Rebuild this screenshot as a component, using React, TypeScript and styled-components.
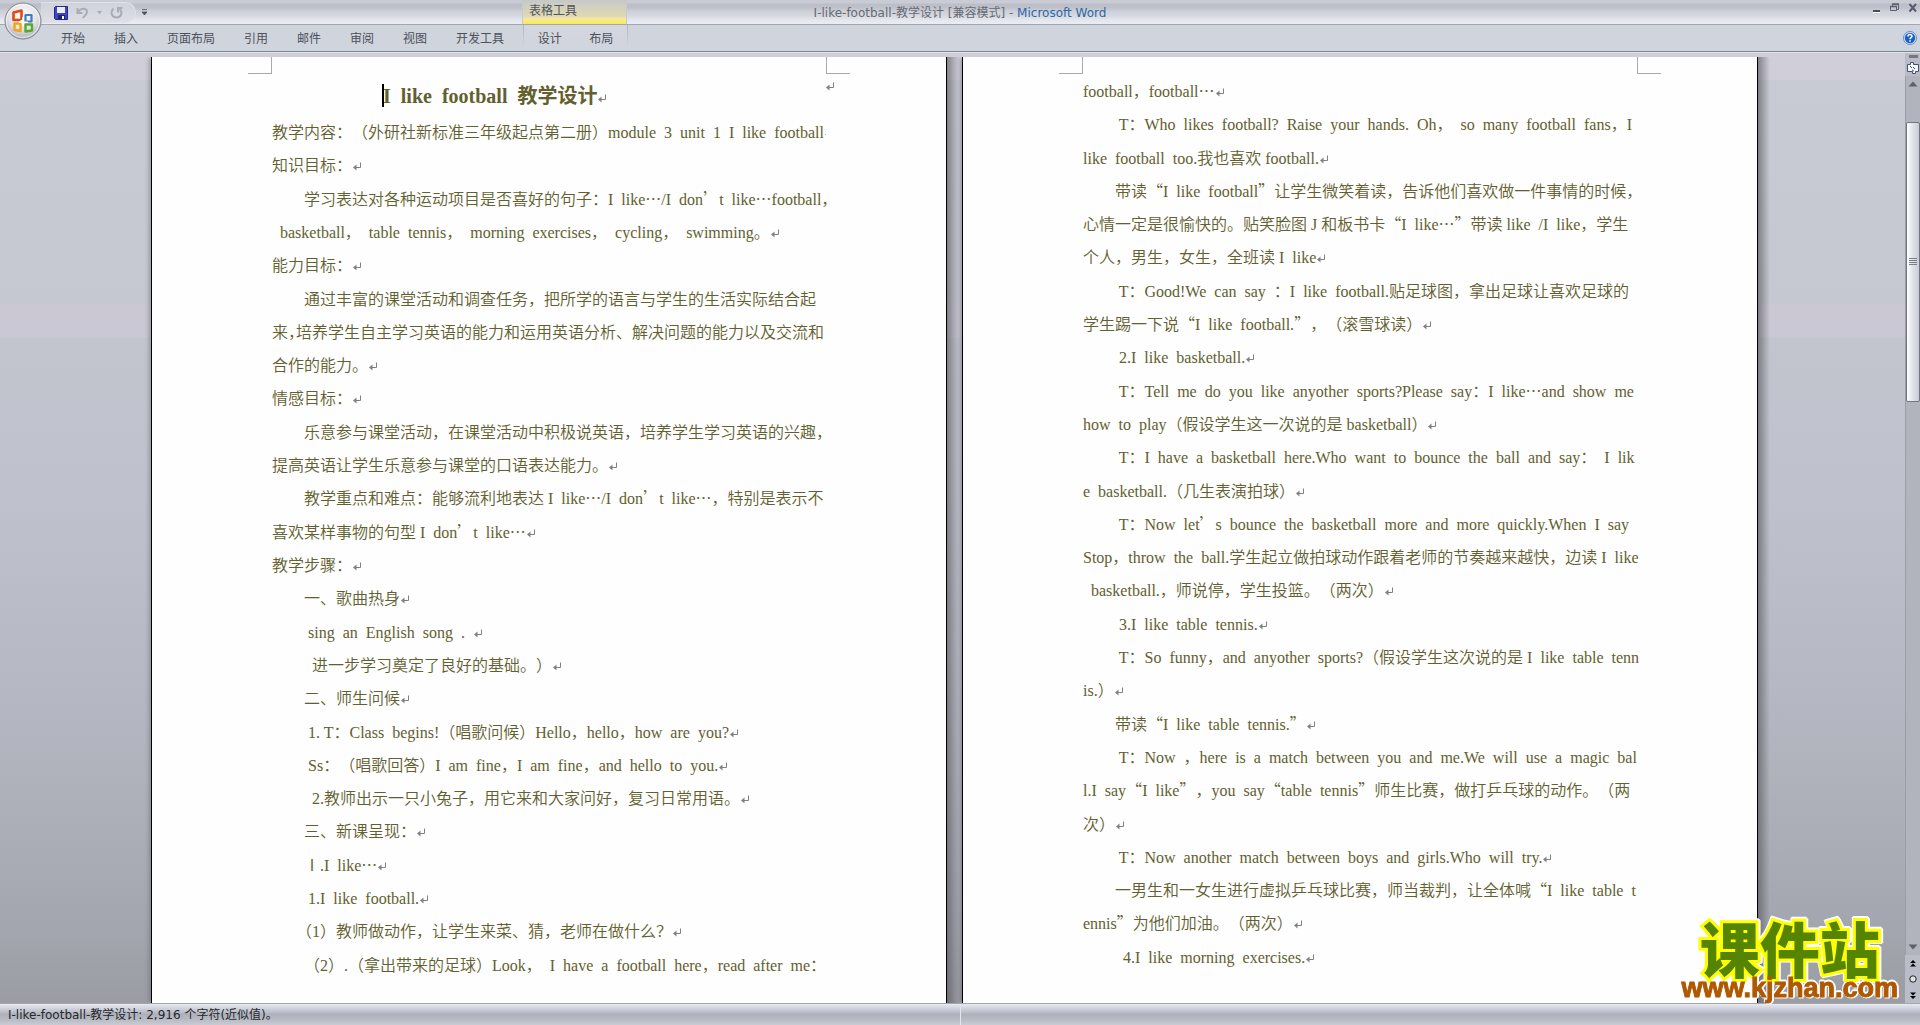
import React from "react";
import styled, { createGlobalStyle, css } from "styled-components";

const uiFont = `"DejaVu Sans", "Noto Sans CJK SC", sans-serif`;
const docFont = `"Liberation Serif", "Noto Sans CJK SC", serif`;

const Global = createGlobalStyle`
  * { box-sizing: border-box; }
  body { margin: 0; background: #fff; font-family: ${uiFont}; font-size: 12px; }
  button { border: 0; padding: 0; background: none; font: inherit; color: inherit; cursor: pointer; }
  svg { display: block; }
`;

const Window = styled.div`
  display: flex;
  flex-direction: column;
  min-height: 100vh;
  overflow: hidden;
  position: relative;
`;

const TitleBar = styled.header`
  display: grid;
  grid-template-columns: 1fr auto 1fr;
  height: 25px;
  background: linear-gradient(#c9ccd5 0, #c9ccd5 3px, #bbbec7 4px, #bfc2ca 8px, #cdd0d8 11px, #d6d9e0 16px, #e4e7ee 20px, #eaedf4 24px);
  border-bottom: 1px solid #a4a7b1;
`;

const TitleLeft = styled.div`
  display: flex;
  padding-left: 41px;
`;

const QuickAccess = styled.div`
  display: flex;
  align-items: center;
  width: 95px;
  height: 21px;
  margin-top: 2px;
  padding-left: 13px;
  gap: 8px;
  border: 1px solid #dfe2e9;
  border-left: 0;
  border-radius: 0 11px 11px 0;
  background: linear-gradient(#cfd2da, #dcdfe6);
`;

const MoreButton = styled.button`
  width: 16px;
  height: 24px;
  display: grid;
  place-items: center;
`;

const ContextTitle = styled.div`
  width: 105px;
  height: 24px;
  margin-left: auto;
  padding: 4px 6px 0;
  line-height: 15px;
  color: #50545e;
  border-left: 1px solid #c6c9cf;
  border-right: 1px solid #c6c9cf;
  background: linear-gradient(#c6c8c9 0, #d4d1bb 8px, #ded9b4 16px, #fbe7a0 19px, #fbe87c 21px, #f3ee45 24px);
`;

const LeftGroup = styled.div`
  display: flex;
  width: 586px;
`;

const Caption = styled.h1`
  margin: 0;
  font-size: 12px;
  font-weight: 400;
  line-height: 26px;
  color: #676a74;
  white-space: pre;
  span { color: #2e66a8; }
`;

const WindowButtons = styled.div`
  display: flex;
  justify-content: flex-end;
  align-items: flex-start;
  gap: 8px;
  padding: 3px 2px;
`;

const OfficeButton = styled.button`
  position: absolute;
  left: 4px;
  top: 2px;
  width: 38px;
  height: 38px;
`;

const TabBar = styled.nav`
  display: flex;
  align-items: stretch;
  height: 27px;
  padding: 0 3px 0 47px;
  background: #d0d4dd;
  border-bottom: 1px solid #7c8590;
`;

const Tab = styled.button`
  padding: 0 14px;
  margin-right: 1px;
  color: #4b505b;
  line-height: 28px;
  white-space: nowrap;
`;

const ContextTabs = styled.div`
  display: flex;
  width: 105px;
  margin-left: 4px;
  border-style: solid;
  border-width: 0 1px;
  border-image: linear-gradient(#aeb2bc, #d0d4dd 80%) 1;
  background: linear-gradient(#d4d7df, #d0d4dd);
  ${Tab} {
    flex: 1;
    margin: 0;
    padding: 0;
  }
`;

const HelpButton = styled.button`
  margin-left: auto;
`;

const RibbonEdge = styled.div`
  height: 5px;
  background: #d0ced9;
  border-top: 1px solid #dde6ea;
`;

const Main = styled.main`
  flex: 1;
  display: flex;
`;

const Workspace = styled.div`
  flex: 1;
  display: flex;
  justify-content: center;
  gap: 15px;
  padding-left: 4px;
  overflow: hidden;
  background: linear-gradient(#d0ced9 0, #d0ced9 23px, #c8cbd4 23px, #c5c8d1 246px, #cbc8d4 247px, #cac8d4 280px, #c2c5ce 281px, #bfc2cc 440px, #b5b8c2 640px, #aaacb5 800px, #a2a5ad 880px, #9b9ca4 946px);
`;

const Sheet = styled.article<{ $top: number; $bottom: number }>`
  position: relative;
  display: flex;
  flex-direction: column;
  flex: 0 0 796px;
  min-width: 0;
  padding: ${(p) => p.$top}px 120px ${(p) => p.$bottom}px;
  background: #fefefe;
  border: solid #000;
  border-width: 0 1px;
  color: #62602f;
  font-family: ${docFont};
  font-size: 16px;
  box-shadow: -3px 0 4px -1px rgba(90, 90, 105, 0.45);
  &::after {
    content: "";
    position: absolute;
    left: calc(100% + 1px);
    top: 0;
    bottom: 0;
    width: 12px;
    background: linear-gradient(to right, rgba(80, 80, 85, 0.6), rgba(80, 80, 90, 0));
  }
`;

const CropMark = styled.i<{ $side: "left" | "right" }>`
  position: absolute;
  top: 0;
  width: 24px;
  height: 17px;
  border-bottom: 1px solid #a9a9b6;
  ${(p) =>
    p.$side === "left"
      ? css`left: 96px; border-right: 1px solid #a9a9b6;`
      : css`right: 96px; border-left: 1px solid #a9a9b6;`}
`;

const CellMark = styled.span`
  position: absolute;
  right: 112px;
  top: 20px;
`;

const Heading = styled.h2`
  position: relative;
  margin: 0;
  padding-left: 111px;
  font-size: 20px;
  line-height: 32px;
  height: 36px;
  white-space: pre;
  text-spacing-trim: space-all;
`;

const Caret = styled.i`
  position: absolute;
  left: 110px;
  top: 4px;
  width: 2px;
  height: 23px;
  background: #000;
`;

const Lines = styled.div`
  flex: 1;
  display: grid;
  grid-auto-rows: 1fr;
`;

const Line = styled.p<{ $indent: boolean; $clip: boolean }>`
  margin: 0;
  line-height: 33px;
  padding-left: ${(p) => (p.$indent ? 32 : 0)}px;
  white-space: pre;
  font-weight: 350;
  text-spacing-trim: space-all;
  min-width: 0;
  overflow: ${(p) => (p.$clip ? "hidden" : "visible")};
`;

const Wide = styled.span`
  font-family: "Noto Sans CJK SC", sans-serif;
  line-height: 1;
`;

const Half = styled.span`
  font-feature-settings: "halt";
`;

const Mark = styled.svg`
  display: inline-block;
  margin-left: 1px;
`;

const ScrollColumn = styled.aside`
  display: flex;
  flex-direction: column;
  width: 15px;
  margin-top: -4px;
  background: #babdc7;
`;

const SplitHandle = styled.div`
  height: 3px;
  margin: 2px 2px 2px 4px;
  background: #77777b;
`;

const RulerButton = styled.button`
  height: 16px;
  background: #b9bcc8;
  display: grid;
  place-items: center;
`;

const Track = styled.div`
  flex: 1;
  display: flex;
  flex-direction: column;
  background: #b1b4bd;
  border-left: 1px solid #9b9ea8;
`;

const ArrowButton = styled.button`
  height: 16px;
  display: grid;
  place-items: center;
`;

const Thumb = styled.div`
  height: 280px;
  margin-top: 30px;
  margin-bottom: auto;
  display: grid;
  place-items: center;
  border: 1px solid #73767f;
  border-radius: 2px;
  background: linear-gradient(to right, #fff, #e1e4eb 45%, #c9ccd6);
`;

const StatusBar = styled.footer`
  display: flex;
  align-items: center;
  height: 22px;
  border-top: 1px solid #a5a6ad;
  color: #26282d;
  background: linear-gradient(#e8eaf0 0, #cdd0db 5px, #b7bac5 9px, #adafb9 10px, #b7bac3 15px, #c8cbd4 21px);
`;

const StatusPart = styled.div`
  flex: 1;
  padding-left: 8px;
  line-height: 20px;
  &:first-child { border-right: 1px solid #e5e7ed; }
`;

const Watermark = styled.div`
  position: absolute;
  right: 22px;
  bottom: 23px;
  display: flex;
  flex-direction: column;
  align-items: center;
  filter: drop-shadow(1px 1px 0 #fff) drop-shadow(-1px -1px 0 #fff) drop-shadow(1px -1px 0 #fff);
`;

const WatermarkName = styled.div`
  font-family: "Noto Sans CJK SC", sans-serif;
  font-weight: 900;
  font-size: 60px;
  line-height: 54px;
  color: #548400;
  -webkit-text-stroke: 6px #ffff00;
  paint-order: stroke fill;
`;

const WatermarkSite = styled.div`
  font-family: "Liberation Sans", sans-serif;
  font-weight: 700;
  font-size: 27px;
  line-height: 28px;
  color: #b05800;
  -webkit-text-stroke: 1px #b05800;
`;

const ReturnMark = () => (
  <Mark width="8" height="9" viewBox="0 0 8 9" aria-hidden="true">
    <path d="M7.5 0.5V5.5H2" fill="none" stroke="#808080" />
    <path d="M0 5.5L3.5 2.5V8.5Z" fill="#808080" />
  </Mark>
);

const Down = ({ up = false, color = "#5c6069" }: { up?: boolean; color?: string }) => (
  <svg width="10" height="6" viewBox="0 0 10 6">
    <path d={up ? "M0.5 5.5L5 0.5L9.5 5.5Z" : "M0.5 0.5L5 5.5L9.5 0.5Z"} fill={color} />
  </svg>
);

const OfficeLogo = () => (
  <svg width="38" height="38" viewBox="0 0 38 38">
    <defs>
      <radialGradient id="orb" cx="50%" cy="35%" r="65%">
        <stop offset="0" stopColor="#fff" />
        <stop offset="0.6" stopColor="#e2e3e8" />
        <stop offset="1" stopColor="#aeb0b8" />
      </radialGradient>
    </defs>
    <circle cx="19" cy="19" r="18" fill="url(#orb)" stroke="#83868f" />
    <circle cx="19" cy="19" r="16.5" fill="none" stroke="#fff" strokeOpacity="0.7" />
    <g fill="none" strokeWidth="2.6" strokeLinejoin="round">
      <path d="M16.5 18H9.5V10.5L17.5 8.5V18" stroke="#dc4b10" />
      <path d="M21.5 13H27.5V19.5H21.5Z" stroke="#3f7dbd" strokeWidth="2.2" />
      <path d="M16.5 21.5H10.5V28L16.5 29Z" stroke="#f4a31a" strokeWidth="2.4" />
      <path d="M21.5 22.5H28V28.5L21.5 29.5Z" stroke="#5aa82a" strokeWidth="2.4" />
    </g>
    <path d="M19 15V24M15 20.2H24" stroke="#fff" strokeWidth="1.6" />
  </svg>
);

const SaveIcon = () => (
  <svg width="14" height="14" viewBox="0 0 14 14">
    <path d="M0.5 1.5L1.5 0.5H13.5V13.5H1.5L0.5 12.5Z" fill="#4145c4" stroke="#24288e" />
    <rect x="3" y="1" width="8" height="6" fill="#e9edfb" />
    <rect x="4" y="9" width="7" height="4.5" fill="#20246f" />
    <rect x="8" y="10" width="2" height="3" fill="#fff" />
  </svg>
);

const UndoIcon = () => (
  <svg width="13" height="13" viewBox="0 0 13 13">
    <path d="M1.5 2V7H6.5M2 6.5C4.5 1.5 11.5 1.5 11 6C10.8 8.5 8.5 9.5 7 12" fill="none" stroke="#a9acb7" strokeWidth="2" />
  </svg>
);

const RedoIcon = () => (
  <svg width="13" height="13" viewBox="0 0 13 13">
    <path d="M3.5 2.5C0 6 1.5 11.5 6.5 11.5C11.5 11.5 13 6 9.5 3M8 6.5V2H12.5" fill="none" stroke="#a9acb7" strokeWidth="2" />
  </svg>
);

type Row = { t: string; indent?: boolean; end?: boolean; clip?: boolean };

const p = (t: string): Row => ({ t, indent: true });
const pe = (t: string): Row => ({ t, indent: true, end: true });
const c = (t: string): Row => ({ t });
const ce = (t: string): Row => ({ t, end: true });

const pageOne: Row[] = [
  { t: "教学内容：（外研社新标准三年级起点第二册）module  3  unit  1  I  like  football", end: true, clip: true },
  ce("知识目标："),
  p("学习表达对各种运动项目是否喜好的句子：I  like…/I  don’t  like…football，"),
  ce("  basketball，  table  tennis，  morning  exercises，  cycling，  swimming。"),
  ce("能力目标："),
  p("通过丰富的课堂活动和调查任务，把所学的语言与学生的生活实际结合起"),
  c("来{，}培养学生自主学习英语的能力和运用英语分析、解决问题的能力以及交流和"),
  ce("合作的能力。"),
  ce("情感目标："),
  p("乐意参与课堂活动，在课堂活动中积极说英语，培养学生学习英语的兴趣，"),
  ce("提高英语让学生乐意参与课堂的口语表达能力。"),
  p("教学重点和难点：能够流利地表达 I  like…/I  don’t  like…，特别是表示不"),
  ce("喜欢某样事物的句型 I  don’t  like…"),
  ce("教学步骤："),
  pe("一、歌曲热身"),
  pe(" sing  an  English  song  .  "),
  pe("  进一步学习奠定了良好的基础。）"),
  pe("二、师生问候"),
  pe(" 1. T：Class  begins!（唱歌问候）Hello，hello，how  are  you?"),
  pe(" Ss：（唱歌回答）I  am  fine，I  am  fine，and  hello  to  you."),
  pe("  2.教师出示一只小兔子，用它来和大家问好，复习日常用语。"),
  pe("三、新课呈现："),
  pe("Ⅰ.I  like…"),
  pe(" 1.I  like  football."),
  ce("      （1）教师做动作，让学生来菜、猜，老师在做什么？"),
  p("（2）.（拿出带来的足球）Look，  I  have  a  football  here，read  after  me："),
];

const pageTwo: Row[] = [
  ce("football，football…"),
  p(" T：Who  likes  football?  Raise  your  hands.  Oh，  so  many  football  fans，I"),
  ce("like  football  too.我也喜欢 football."),
  p("带读“I  like  football”让学生微笑着读，告诉他们喜欢做一件事情的时候，"),
  c("心情一定是很愉快的。贴笑脸图 J 和板书卡“I  like…”带读 like  /I  like，学生"),
  ce("个人，男生，女生，全班读 I  like"),
  p(" T：Good!We  can  say  ：I  like  football.贴足球图，拿出足球让喜欢足球的"),
  ce("学生踢一下说“I  like  football.”，（滚雪球读）"),
  pe(" 2.I  like  basketball."),
  p(" T：Tell  me  do  you  like  anyother  sports?Please  say：I  like…and  show  me"),
  ce("how  to  play（假设学生这一次说的是 basketball）"),
  p(" T：I  have  a  basketball  here.Who  want  to  bounce  the  ball  and  say：  I  lik"),
  ce("e  basketball.（几生表演拍球）"),
  p(" T：Now  let’s  bounce  the  basketball  more  and  more  quickly.When  I  say"),
  c("Stop，throw  the  ball.学生起立做拍球动作跟着老师的节奏越来越快，边读 I  like"),
  ce("  basketball.，师说停，学生投篮。（两次）"),
  pe(" 3.I  like  table  tennis."),
  p(" T：So  funny，and  anyother  sports?（假设学生这次说的是 I  like  table  tenn"),
  ce("is.）"),
  pe("带读“I  like  table  tennis.”"),
  p(" T：Now  ，here  is  a  match  between  you  and  me.We  will  use  a  magic  bal"),
  c("l.I  say“I  like”，you  say“table  tennis”师生比赛，做打乒乓球的动作。（两"),
  ce("次）"),
  pe(" T：Now  another  match  between  boys  and  girls.Who  will  try."),
  p("一男生和一女生进行虚拟乒乓球比赛，师当裁判，让全体喊“I  like  table  t"),
  ce("ennis”为他们加油。（两次）"),
  pe("  4.I  like  morning  exercises."),
];

const renderText = (t: string) =>
  t.split(/([“”’…Ⅰ]+|\{.\})/).map((s, i) => {
    if (i % 2 === 0) return s;
    return s[0] === "{" ? <Half key={i}>{s[1]}</Half> : <Wide key={i}>{s}</Wide>;
  });

const Body = ({ rows }: { rows: Row[] }) => (
  <Lines>
    {rows.map((r, i) => (
      <Line key={i} $indent={!!r.indent} $clip={!!r.clip}>
        {renderText(r.t)}
        {r.end && <ReturnMark />}
      </Line>
    ))}
  </Lines>
);

const tabs = ["开始", "插入", "页面布局", "引用", "邮件", "审阅", "视图", "开发工具"];

export default function App() {
  return (
    <Window lang="zh-CN">
      <Global />
      <TitleBar>
        <TitleLeft>
          <LeftGroup>
            <QuickAccess>
              <button aria-label="保存"><SaveIcon /></button>
              <button aria-label="撤消"><UndoIcon /></button>
              <button aria-label="撤消列表">
                <svg width="5" height="3" viewBox="0 0 5 3"><path d="M0 0H5L2.5 3Z" fill="#a4a7b1" /></svg>
              </button>
              <button aria-label="恢复"><RedoIcon /></button>
            </QuickAccess>
            <MoreButton aria-label="自定义快速访问工具栏">
              <svg width="5" height="6" viewBox="0 0 5 6"><path d="M0 0.5H5M0 3H5L2.5 6Z" fill="#4f535d" stroke="#4f535d" strokeWidth="0.8" /></svg>
            </MoreButton>
            <ContextTitle>表格工具</ContextTitle>
          </LeftGroup>
        </TitleLeft>
        <Caption>I-like-football-教学设计 [兼容模式] - <span>Microsoft Word</span></Caption>
        <WindowButtons>
          <button aria-label="最小化">
            <svg width="10" height="11" viewBox="0 0 10 11"><path d="M1 7H8V9H1Z" fill="#4a4d55" /><path d="M1 9.5H8" stroke="#fff" /></svg>
          </button>
          <button aria-label="还原">
            <svg width="10" height="10" viewBox="0 0 10 10"><path d="M2.5 3V1.5H8.5V6.5H7M0.5 3.5H6.5V7.5H0.5Z" fill="none" stroke="#5b6272" /><path d="M2 1H9M0 3.5H7" stroke="#5b6272" strokeWidth="1.5" /></svg>
          </button>
          <button aria-label="关闭">
            <svg width="10" height="10" viewBox="0 0 10 10"><path d="M1.5 1L8 8.5M8 1L1.5 8.5" stroke="#565d6e" strokeWidth="2" /></svg>
          </button>
        </WindowButtons>
      </TitleBar>
      <TabBar>
        {tabs.map((t) => <Tab key={t}>{t}</Tab>)}
        <ContextTabs>
          <Tab>设计</Tab>
          <Tab>布局</Tab>
        </ContextTabs>
        <HelpButton aria-label="帮助">
          <svg width="14" height="14" viewBox="0 0 14 14">
            <circle cx="7" cy="7" r="6.5" fill="#dbe7f8" stroke="#5b8fd0" />
            <circle cx="7" cy="7" r="5.2" fill="#1d5fc8" />
            <path d="M5 5.5C5 3 9 3 9 5.3C9 6.8 7 6.6 7 8.2M7 9.3V10.8" fill="none" stroke="#fff" strokeWidth="1.5" />
          </svg>
        </HelpButton>
      </TabBar>
      <RibbonEdge />
      <Main>
        <Workspace>
          <Sheet $top={23} $bottom={21}>
            <CropMark $side="left" />
            <CropMark $side="right" />
            <CellMark><ReturnMark /></CellMark>
            <Heading><Caret />I  like  football  教学设计<ReturnMark /></Heading>
            <Body rows={pageOne} />
          </Sheet>
          <Sheet $top={18} $bottom={29}>
            <CropMark $side="left" />
            <CropMark $side="right" />
            <Body rows={pageTwo} />
          </Sheet>
        </Workspace>
        <ScrollColumn>
          <SplitHandle />
          <RulerButton aria-label="标尺">
            <svg width="12" height="12" viewBox="0 0 12 12">
              <path d="M0.5 2.5H3.5V0.5H6.5V2.5H11.5V9.5H8.5V11.5H5.5V9.5H0.5Z" fill="#f4f6fa" stroke="#46536c" />
              <path d="M3 4L5 6M6 5L8 7M5 8L7 9" stroke="#46536c" />
            </svg>
          </RulerButton>
          <Track>
            <ArrowButton aria-label="向上滚动"><Down up /></ArrowButton>
            <Thumb>
              <svg width="8" height="8" viewBox="0 0 8 8"><path d="M0 0.5H8M0 2.5H8M0 4.5H8M0 6.5H8" stroke="#7b7e88" /></svg>
            </Thumb>
            <ArrowButton aria-label="向下滚动"><Down /></ArrowButton>
          </Track>
          <ArrowButton aria-label="前一页">
            <svg width="6" height="7" viewBox="0 0 6 7"><path d="M0 3L3 0L6 3ZM0 6.5L3 3.5L6 6.5Z" fill="#000" /></svg>
          </ArrowButton>
          <ArrowButton aria-label="选择浏览对象">
            <svg width="8" height="8" viewBox="0 0 8 8"><circle cx="4" cy="4" r="3.2" fill="#dfe1e6" stroke="#222" /></svg>
          </ArrowButton>
          <ArrowButton aria-label="下一页">
            <svg width="6" height="7" viewBox="0 0 6 7"><path d="M0 0.5L3 3.5L6 0.5ZM0 4L3 7L6 4Z" fill="#000" /></svg>
          </ArrowButton>
        </ScrollColumn>
      </Main>
      <StatusBar>
        <StatusPart>I-like-football-教学设计: 2,916 个字符(近似值)。</StatusPart>
        <StatusPart />
      </StatusBar>
      <OfficeButton aria-label="Office 按钮"><OfficeLogo /></OfficeButton>
      <Watermark>
        <WatermarkName>课件站</WatermarkName>
        <WatermarkSite>www.kjzhan.com</WatermarkSite>
      </Watermark>
    </Window>
  );
}
